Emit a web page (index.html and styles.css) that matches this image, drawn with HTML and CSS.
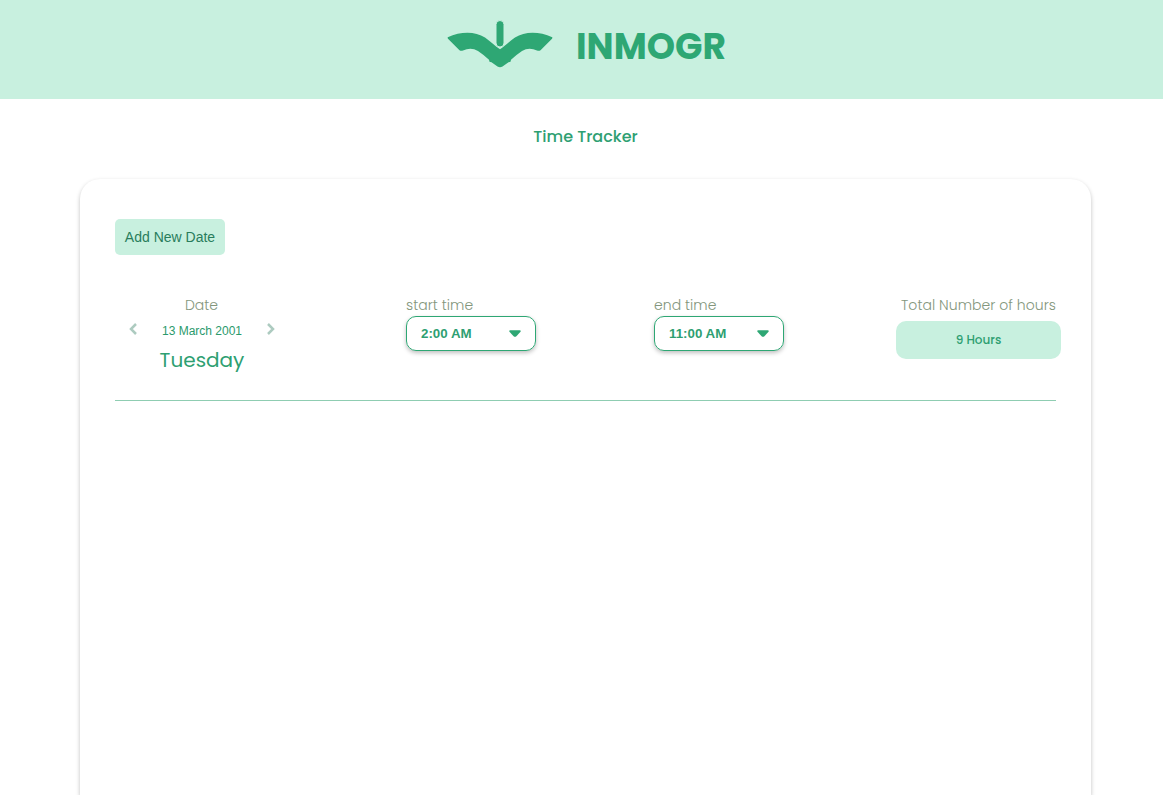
FILE: index.html
```html
<!DOCTYPE html>
<html lang="en">
<head>
<meta charset="utf-8">
<title>Inmogr Time Tracker</title>
<link rel="stylesheet" href="styles.css">
</head>
<body>
<header class="header">
  <svg class="logo" viewBox="0 0 106 48" width="106" height="48" aria-hidden="true">
    <path d="M.7 17.300C14 11.300 28 11.300 38 17.500C44 21.500 48 26.500 53 29.200C58 26.500 62 21.500 68 17.500C78 11.300 92 11.300 105.300 17.300Q105.500 18 105 18.700L93.500 30.300Q92 31.300 90 30.500Q82 26.700 75 31Q69 35 64 39.800L63.500 41.800L61.500 42.300L55.500 46.500Q53 48 50.500 46.500L44.500 42.300L42.500 41.800L42 39.800Q37 35 31 31Q24 26.700 16 30.500Q14 31.300 12.500 30.300L1 18.700Q.5 18 .7 17.300Z"/>
    <rect class="logo-stem" x="49" y="0.500" width="8" height="26.500" rx="4"/>
  </svg>
  <span class="brand">INMOGR</span>
</header>
<main class="page">
  <h1 class="title">Time Tracker</h1>
  <section class="card">
    <button class="add">Add New Date</button>
    <div class="entry">
      <div class="date">
        <span class="label">Date</span>
        <div class="picker">
          <svg class="chevron" viewBox="0 0 8 12" width="8" height="12"><path d="M7 1 2 6l5 5"/></svg>
          <span class="day">13 March 2001</span>
          <svg class="chevron" viewBox="0 0 8 12" width="8" height="12"><path d="M1 1 6 6l-5 5"/></svg>
        </div>
        <span class="weekday">Tuesday</span>
      </div>
      <div class="time">
        <span class="label">start time</span>
        <div class="select"><span class="value">2:00 AM</span>
          <svg class="caret" viewBox="0 0 12 7" width="12" height="7"><path d="M1.300.300H10.700Q12.500.700 11.300 2L7.400 6.200Q6 7.300 4.600 6.200L.700 2Q-.500.700 1.300.300Z"/></svg>
        </div>
      </div>
      <div class="time">
        <span class="label">end time</span>
        <div class="select"><span class="value">11:00 AM</span>
          <svg class="caret" viewBox="0 0 12 7" width="12" height="7"><path d="M1.300.300H10.700Q12.500.700 11.300 2L7.400 6.200Q6 7.300 4.600 6.200L.700 2Q-.500.700 1.300.300Z"/></svg>
        </div>
      </div>
      <div class="total">
        <span class="label">Total Number of hours</span>
        <div class="hours">9 Hours</div>
      </div>
    </div>
  </section>
</main>
</body>
</html>
```
FILE: styles.css
```css
* { box-sizing: border-box; }
body {
  margin: 0;
  background: #fff;
  color: #2ea774;
  font-family: Poppins, Inter, sans-serif;
}
.header {
  display: flex;
  height: 99px;
  padding: 20px 0 0 447px;
  background: #c8f0df;
}
.logo { fill: #2ea774; }
.logo-stem { stroke: #c8f0df; stroke-width: 1; }
.brand {
  margin-left: 23px;
  font-size: 36px;
  font-weight: 700;
  line-height: 54px;
}
.page {
  display: flex;
  flex-direction: column;
  height: 696px;
}
.title {
  margin: 0;
  padding: 25px 0 30px 8px;
  text-align: center;
  color: #2e9f72;
  font-size: 16px;
  font-weight: 500;
  line-height: 25px;
}
.card {
  flex: 1;
  width: 1011px;
  margin-left: 80px;
  padding: 40px 35px;
  border-radius: 20px 20px 0 0;
  box-shadow: 0 2px 4px rgba(0, 0, 0, 0.25);
}
.add {
  display: block;
  width: 110px;
  height: 36px;
  padding: 0;
  border: 0;
  border-radius: 5px;
  background: #c8f0df;
  color: #287d5c;
  font: 14px "Liberation Sans", Arial, sans-serif;
}
.entry {
  display: flex;
  height: 146px;
  padding-top: 39px;
  border-bottom: 1px solid #8fcdb2;
}
.label {
  display: block;
  color: #83967c;
  font-size: 14px;
  font-weight: 300;
  line-height: 22px;
  letter-spacing: 0.05px;
  white-space: nowrap;
}
.date { width: 173px; text-align: center; }
.picker {
  display: flex;
  align-items: center;
  justify-content: space-between;
  height: 30px;
  padding: 0 13px 0 14px;
}
.chevron {
  margin-top: -4px;
  fill: none;
  stroke: #adcbc0;
  stroke-width: 2.5;
}
.day { color: #2b9a6c; font: 12px "Liberation Sans", Arial, sans-serif; }
.weekday { display: block; padding-left: 1px; color: #2e9f72; font-size: 20px; line-height: 28px; }
.time { width: 130px; margin-left: 118px; }
.select {
  display: flex;
  align-items: center;
  justify-content: space-between;
  height: 35px;
  padding: 0 14px;
  border: 1px solid #2ea774;
  border-radius: 10px;
  box-shadow: 0 2px 4px rgba(0, 0, 0, 0.25);
  color: #2e9f72;
  font: bold 13.333px "Liberation Sans", Arial, sans-serif;
}
.value { padding-bottom: 1px; }
.caret { fill: #2ea774; }
.total { width: 165px; margin: 0 -5px 0 112px; flex-shrink: 0; text-align: center; }
.hours {
  height: 38px;
  margin-top: 5px;
  border-radius: 10px;
  background: #c8f0df;
  color: #2e9f72;
  font-size: 12px;
  font-weight: 500;
  line-height: 38px;
}
```
